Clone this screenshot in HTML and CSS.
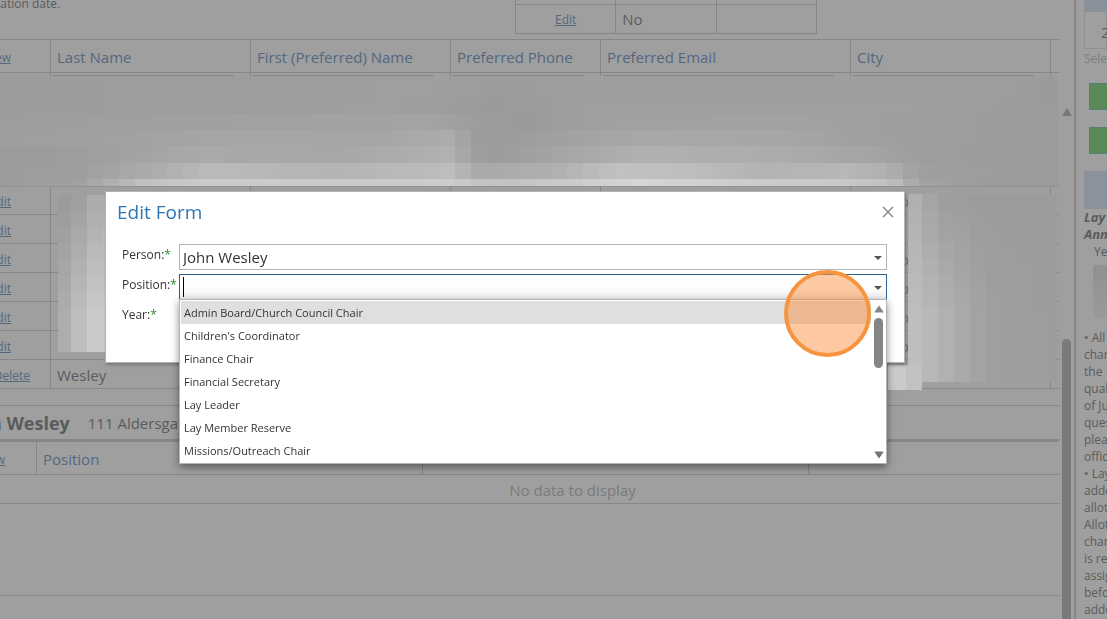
FILE: index.html
```html
<!DOCTYPE html>
<html lang="en">
  <head>
    <meta charset="UTF-8">
    <meta name="viewport" content="width=device-width, initial-scale=1.0">
    <title>Edit Form</title>
    <link rel="stylesheet" href="styles.css">
  </head>
  <body>
    <div class="page">
      <main class="main">
        <div class="content">
          <div class="top">
            <div class="top_note">tation date.</div>
            <table class="top_table">
              <tr class="cut"><td></td><td></td><td></td></tr>
              <tr><td class="center"><a href="#">Edit</a></td><td>No</td><td></td></tr>
            </table>
          </div>

          <div class="people_wrap">
            <table class="grid people">
              <colgroup>
                <col class="c_cmd"><col class="c_name"><col class="c_name"><col class="c_phone"><col class="c_email"><col><col class="c_zip">
              </colgroup>
              <tr class="head">
                <th class="cmd"><a href="#">New</a></th><th>Last Name</th><th>First (Preferred) Name</th><th>Preferred Phone</th><th>Preferred Email</th><th>City</th><th></th>
              </tr>
              <tr class="filter">
                <td></td><td><div></div></td><td><div></div></td><td><div></div></td><td><div></div></td><td><div></div></td><td></td>
              </tr>
              <tr><td class="cmd"><a href="#">Edit</a></td><td></td><td></td><td></td><td></td><td class="tail">o</td><td></td></tr>
              <tr><td class="cmd"><a href="#">Edit</a></td><td></td><td></td><td></td><td></td><td class="tail">l</td><td></td></tr>
              <tr><td class="cmd"><a href="#">Edit</a></td><td></td><td></td><td></td><td></td><td class="tail">o</td><td></td></tr>
              <tr><td class="cmd"><a href="#">Edit</a></td><td></td><td></td><td></td><td></td><td class="tail">o</td><td></td></tr>
              <tr><td class="cmd"><a href="#">Edit</a></td><td></td><td></td><td></td><td></td><td class="tail">o</td><td></td></tr>
              <tr><td class="cmd"><a href="#">Edit</a></td><td></td><td></td><td></td><td></td><td class="tail">o</td><td></td></tr>
              <tr><td class="cmd wide"><a href="#">Edit</a> <a href="#">Delete</a></td><td>Wesley</td><td></td><td></td><td></td><td></td><td></td></tr>
            </table>
            <canvas class="mosaic" id="mosaic" width="1057" height="352"></canvas>
          </div>

          <div class="person">
            <b><a href="#">John</a> Wesley</b><span>111 Aldersgate</span>
          </div>
          <table class="grid positions">
            <colgroup><col class="c_cmd2"><col class="c_pos"><col class="c_pos"><col></colgroup>
            <tr class="head"><th class="cmd"><a href="#">New</a></th><th>Position</th><th></th><th></th></tr>
            <tr><td class="empty" colspan="4">No data to display</td></tr>
          </table>
          <div class="blank"></div>
        </div>
        <div class="scroll">
          <div class="scroll_up"></div>
          <div class="scroll_thumb"></div>
        </div>
      </main>

      <aside class="side">
        <div class="side_bar"></div>
        <div class="side_year">2024</div>
        <div class="side_hint">Select</div>
        <button class="side_button" type="button" aria-label="Open"></button>
        <button class="side_button" type="button" aria-label="Save"></button>
        <div class="side_panel"></div>
        <div class="side_title">Lay<br>Annual</div>
        <div class="side_sub">Year</div>
        <div class="side_blur"></div>
        <div class="side_text">• All<br>charge<br>the<br>qualified<br>of July<br>questions<br>please<br>office<br>• Lay<br>added<br>allotted<br>Allotted<br>charge<br>is required<br>assigned<br>before<br>added</div>
      </aside>

      <form class="dialog" role="dialog" aria-labelledby="title">
        <div class="dialog_head">
          <h2 id="title">Edit Form</h2>
          <button class="close" type="button" aria-label="Close">
            <svg width="12" height="12" viewBox="0 0 12 12"><path d="M1 1L11 11M11 1L1 11" stroke="#808080" stroke-width="1.3" fill="none"/></svg>
          </button>
        </div>
        <div class="fields">
          <label for="person">Person:<i>*</i></label>
          <div class="combo">
            <select id="person"><option>John Wesley</option></select>
          </div>
          <label for="position">Position:<i>*</i></label>
          <div class="combo active">
            <input id="position" type="text" role="combobox" aria-expanded="true" aria-controls="list">
            <span class="caret"></span>
            <div class="dropdown">
              <ul id="list" role="listbox">
                <li role="option" class="selected">Admin Board/Church Council Chair</li>
                <li role="option">Children's Coordinator</li>
                <li role="option">Finance Chair</li>
                <li role="option">Financial Secretary</li>
                <li role="option">Lay Leader</li>
                <li role="option">Lay Member Reserve</li>
                <li role="option">Missions/Outreach Chair</li>
              </ul>
              <div class="list_scroll">
                <svg width="10" height="8" viewBox="0 0 10 8"><path d="M5 0.5L9.5 7Q9.5 7.5 9 7.5H1Q0.5 7.5 0.5 7Z" fill="#858585"/></svg>
                <div class="list_thumb"></div>
                <svg class="down" width="10" height="8" viewBox="0 0 10 8"><path d="M5 7.5L9.5 1Q9.5 0.5 9 0.5H1Q0.5 0.5 0.5 1Z" fill="#757575"/></svg>
              </div>
            </div>
          </div>
          <label for="year">Year:<i>*</i></label>
          <div class="combo">
            <select id="year"><option></option></select>
          </div>
        </div>
      </form>
      <div class="pointer"></div>
    </div>

    <script>
      // Privacy mosaic over the names. Each row: top, bottom, then x/grey stops.
      var rows = [
        [37, 59, [0,156, 220,157, 420,159, 500,156, 620,158, 1000,158, 1057,154]],
        [59, 75, [0,156, 200,157, 400,159, 500,154, 600,159, 900,159, 1057,155]],
        [75, 91, [0,157, 120,159, 430,163, 480,157, 520,154, 620,161, 800,162, 900,158, 1057,155]],
        [91, 107, [0,158, 120,161, 240,166, 380,165, 450,172, 475,156, 500,155, 560,160, 640,168, 780,166, 880,159, 1057,155]],
        [107, 124, [0,155, 80,157, 200,169, 340,167, 450,177, 475,158, 500,156, 560,165, 640,176, 780,172, 880,163, 930,157, 1057,155]],
        [124, 140, [0,156, 80,158, 150,171, 210,186, 340,180, 450,189, 480,169, 550,175, 620,193, 680,191, 760,179, 850,183, 885,176, 920,159, 1057,155]],
        [140, 147, [0,156, 80,160, 115,178, 150,194, 210,203, 340,202, 450,204, 490,193, 560,201, 640,213, 760,203, 850,199, 890,192, 920,163, 960,157, 1057,155]]
      ];
      // Blocks that stick out on both sides of the dialog: x, grey at top, grey at bottom
      var sides = [
        [58, 106, 156, 313, 7, [58,154,168, 79,160,190, 106,180,210]],
        [908, 1057, 155, 343, 10, [908,180,192, 930,165,184, 946,158,177, 962,157,170, 980,156,162, 1000,156,158, 1057,156,156]]
      ];
      var ctx = document.getElementById('mosaic').getContext('2d');

      function level(stops, x, step, k) {
        for (var i = step; i < stops.length; i += step) {
          if (x <= stops[i]) {
            var t = (x - stops[i - step]) / (stops[i] - stops[i - step]);
            return stops[i - step + k] + t * (stops[i + k] - stops[i - step + k]);
          }
        }
        return stops[stops.length - step + k];
      }

      function block(x1, y1, x2, y2, v) {
        v = Math.round(v);
        ctx.fillStyle = 'rgb(' + v + ',' + v + ',' + v + ')';
        ctx.fillRect(x1, y1, x2 - x1, y2 - y1);
      }

      rows.forEach(function (r) {
        for (var x = -9; x < 1057; x += 16) {
          block(x, r[0], x + 16, r[1], level(r[2], Math.max(0, x + 8), 2, 1));
        }
      });
      block(0, 147, 1057, 148, 145);

      sides.forEach(function (s) {
        for (var y = s[2]; y < s[3]; y += 16) {
          for (var x = s[0] - (s[0] - s[4]) % 16; x < s[1]; x += 16) {
            var left = Math.max(x, s[0]);
            var mid = Math.max(s[0], x + 8);
            var t = Math.min(1, (y - s[2]) / 112);
            var a = level(s[5], mid, 3, 1);
            var b = level(s[5], mid, 3, 2);
            block(left, y, Math.min(x + 16, s[1]), Math.min(y + 16, s[3]), a + t * (b - a));
          }
        }
      });
      block(888, 326, 906, 351, 203);
      block(906, 326, 922, 351, 194);
    </script>
  </body>
</html>
```
FILE: styles.css
```css
body, html {
    margin: 0;
    padding: 0;
    height: 100%;
    font-family: "Open Sans", "Noto Sans", sans-serif;
}
* {
    box-sizing: border-box;
}
a {
    color: #53687f;
    font-size: 12px;
}
.page {
    position: relative;
    display: flex;
    height: 100vh;
    overflow: hidden;
    background: #9f9f9f;
    color: #5b5b5b;
    font-size: 15px;
}
.main {
    flex: 1;
    min-width: 0;
    display: flex;
    border-right: 2px solid #868686;
}
.content {
    flex: 1;
    min-width: 0;
    overflow: hidden;
}

/* strip above the people grid */
.top {
    display: flex;
    height: 39px;
    overflow: hidden;
}
.top_note {
    width: 519px;
    margin: -6px 0 0 -4px;
    font-size: 12px;
    line-height: 20px;
}
.top_table {
    border-collapse: collapse;
    table-layout: fixed;
    width: 302px;
    height: 34px;
}
.top_table td {
    border: 1px solid #868686;
    padding: 0 6px;
    height: 29px;
    line-height: 20px;
}
.top_table .cut td {
    height: 4px;
    border-top: none;
}
.top_table .center {
    text-align: center;
}

.grid {
    border-collapse: separate;
    border-spacing: 0;
    table-layout: fixed;
    margin-left: -60px;
    width: calc(100% + 60px);
}
.grid th, .grid td {
    height: 29px;
    padding: 1px 6px 0;
    border-right: 1px solid #868686;
    border-bottom: 1px solid #868686;
    text-align: left;
    font-weight: normal;
    line-height: 20px;
    white-space: nowrap;
    overflow: hidden;
}
.grid th:last-child, .grid td:last-child {
    border-right: none;
}
.grid .head th {
    height: 33px;
    color: #53687f;
}
.grid .cmd {
    text-align: right;
    padding-right: 39px;
}
.grid .wide {
    padding-right: 20px;
}
.grid .tail {
    padding-left: 49px;
}
.c_cmd { width: 111px; }
.c_name { width: 200px; }
.c_phone { width: 150px; }
.c_email { width: 250px; }
.c_zip { width: 8px; }
.people_wrap {
    position: relative;
    border-top: 1px solid #868686;
}
.grid .filter td {
    height: 113px;
    padding: 2px 16px 0 2px;
    vertical-align: top;
}
.filter div {
    border-top: 1px solid #868686;
}
.mosaic {
    position: absolute;
    top: -1px;
    left: 0;
}

/* selected person */
.person {
    display: flex;
    align-items: center;
    gap: 18px;
    height: 37px;
    margin: 16px 0 0 -39px;
    border-top: 1px solid #868686;
    border-bottom: 3px solid #868686;
    white-space: nowrap;
}
.person b, .person a {
    font-size: 18px;
    text-decoration: none;
}
.c_cmd2 { width: 97px; }
.c_pos { width: 386px; }
.positions .head .cmd {
    padding-right: 31px;
}
.grid .empty {
    padding-left: 152px;
    text-align: center;
    color: #7b7b7b;
}
.blank {
    height: 92px;
    border-bottom: 1px solid #868686;
}

.scroll {
    width: 15px;
    padding: 108px 2px 0 2px;
    display: flex;
    flex-direction: column;
    align-items: center;
}
.scroll_up {
    border: 5px solid transparent;
    border-top: none;
    border-bottom: 8px solid #787878;
}
.scroll_thumb {
    flex: 1;
    width: 9px;
    margin-top: 223px;
    border-radius: 5px 5px 0 0;
    background: #7a7a7a;
}

/* right column */
.side {
    flex: 0 0 31px;
    padding-left: 8px;
    overflow: hidden;
    white-space: nowrap;
    font-size: 12px;
    line-height: 17px;
}
.side_bar {
    height: 12px;
    background: #8a919b;
}
.side_year {
    height: 37px;
    padding: 10px 0 0 16px;
    border: 1px solid #919191;
    border-top: none;
    font-size: 15px;
    line-height: 20px;
}
.side_hint {
    margin: 1px 0 16px;
    color: #808080;
}
.side_button {
    display: block;
    width: 80px;
    height: 27px;
    margin: 0 0 17px 5px;
    border: 1px solid #537f7c;
    background: #5a8a5a;
}
.side_panel {
    height: 38px;
    background: #8b929b;
}
.side_title {
    font-size: 13px;
    font-weight: bold;
    font-style: italic;
}
.side_sub {
    padding-left: 10px;
}
.side_blur {
    height: 53px;
    margin: 5px 0 11px 9px;
    background: linear-gradient(#919191, #9a9a9a);
}

/* dialog */
.dialog {
    position: absolute;
    top: 191px;
    left: 105px;
    right: 202px;
    padding: 7px 17px 32px 12px;
    border: 1px solid #b4b4b4;
    background: #fff;
    box-shadow: 1px 2px 3px #777;
}
.dialog_head {
    display: flex;
    justify-content: space-between;
    align-items: center;
    height: 26px;
    margin: 0 -9px 19px -1px;
}
.dialog h2 {
    margin: 0;
    color: #2d76b5;
    font-size: 19px;
    font-weight: normal;
    line-height: 26px;
}
.close {
    display: flex;
    padding: 2px;
    border: none;
    background: none;
}
.fields {
    display: grid;
    grid-template-columns: 57px 1fr;
    grid-auto-rows: 26px;
    row-gap: 4px;
    padding-left: 4px;
    color: #333;
    font-size: 12px;
}
.fields label {
    line-height: 22px;
    white-space: nowrap;
}
.fields i {
    color: #2e8b2e;
    font-style: normal;
}
.combo {
    position: relative;
    border: 1px solid #b4b4b4;
}
.combo::after {
    content: "";
    position: absolute;
    top: 11px;
    right: 4px;
    border: 4px solid transparent;
    border-top-color: #555;
    border-bottom: none;
}
.combo select, .combo input {
    appearance: none;
    display: block;
    width: 100%;
    height: 24px;
    padding: 0 3px;
    border: none;
    outline: none;
    background: #fff;
    color: #333;
    font-family: inherit;
    font-size: 15px;
}
.combo.active {
    border-color: #2f628f;
}
.combo.active input {
    background: linear-gradient(#fff 50%, #eee);
}
.caret {
    position: absolute;
    top: 2px;
    left: 3px;
    width: 1px;
    height: 20px;
    background: #000;
}
.dropdown {
    position: absolute;
    z-index: 1;
    top: 24px;
    left: -1px;
    right: -1px;
    display: flex;
    padding: 1px 0 1px 1px;
    border: 1px solid #b4b4b4;
    background: #fff;
    box-shadow: 0 3px 8px rgba(0, 0, 0, 0.45);
    font-size: 11px;
}
.dropdown ul {
    flex: 1;
    margin: 0;
    padding: 0;
    list-style: none;
}
.dropdown li {
    padding: 0 3px;
    line-height: 23px;
}
.dropdown .selected {
    background: #dfdfdf;
}
.list_scroll {
    display: flex;
    flex-direction: column;
    align-items: center;
    width: 15px;
    padding: 4px 0 3px;
}
.list_thumb {
    width: 9px;
    height: 50px;
    margin-top: 5px;
    border-radius: 5px;
    background: #858585;
}
.list_scroll .down {
    margin-top: auto;
}

/* click marker */
.pointer {
    position: absolute;
    z-index: 2;
    top: 270px;
    right: 236px;
    width: 87px;
    height: 87px;
    border: 4px solid #f6943f;
    border-radius: 50%;
    background: rgba(250, 143, 60, 0.48);
}
```
